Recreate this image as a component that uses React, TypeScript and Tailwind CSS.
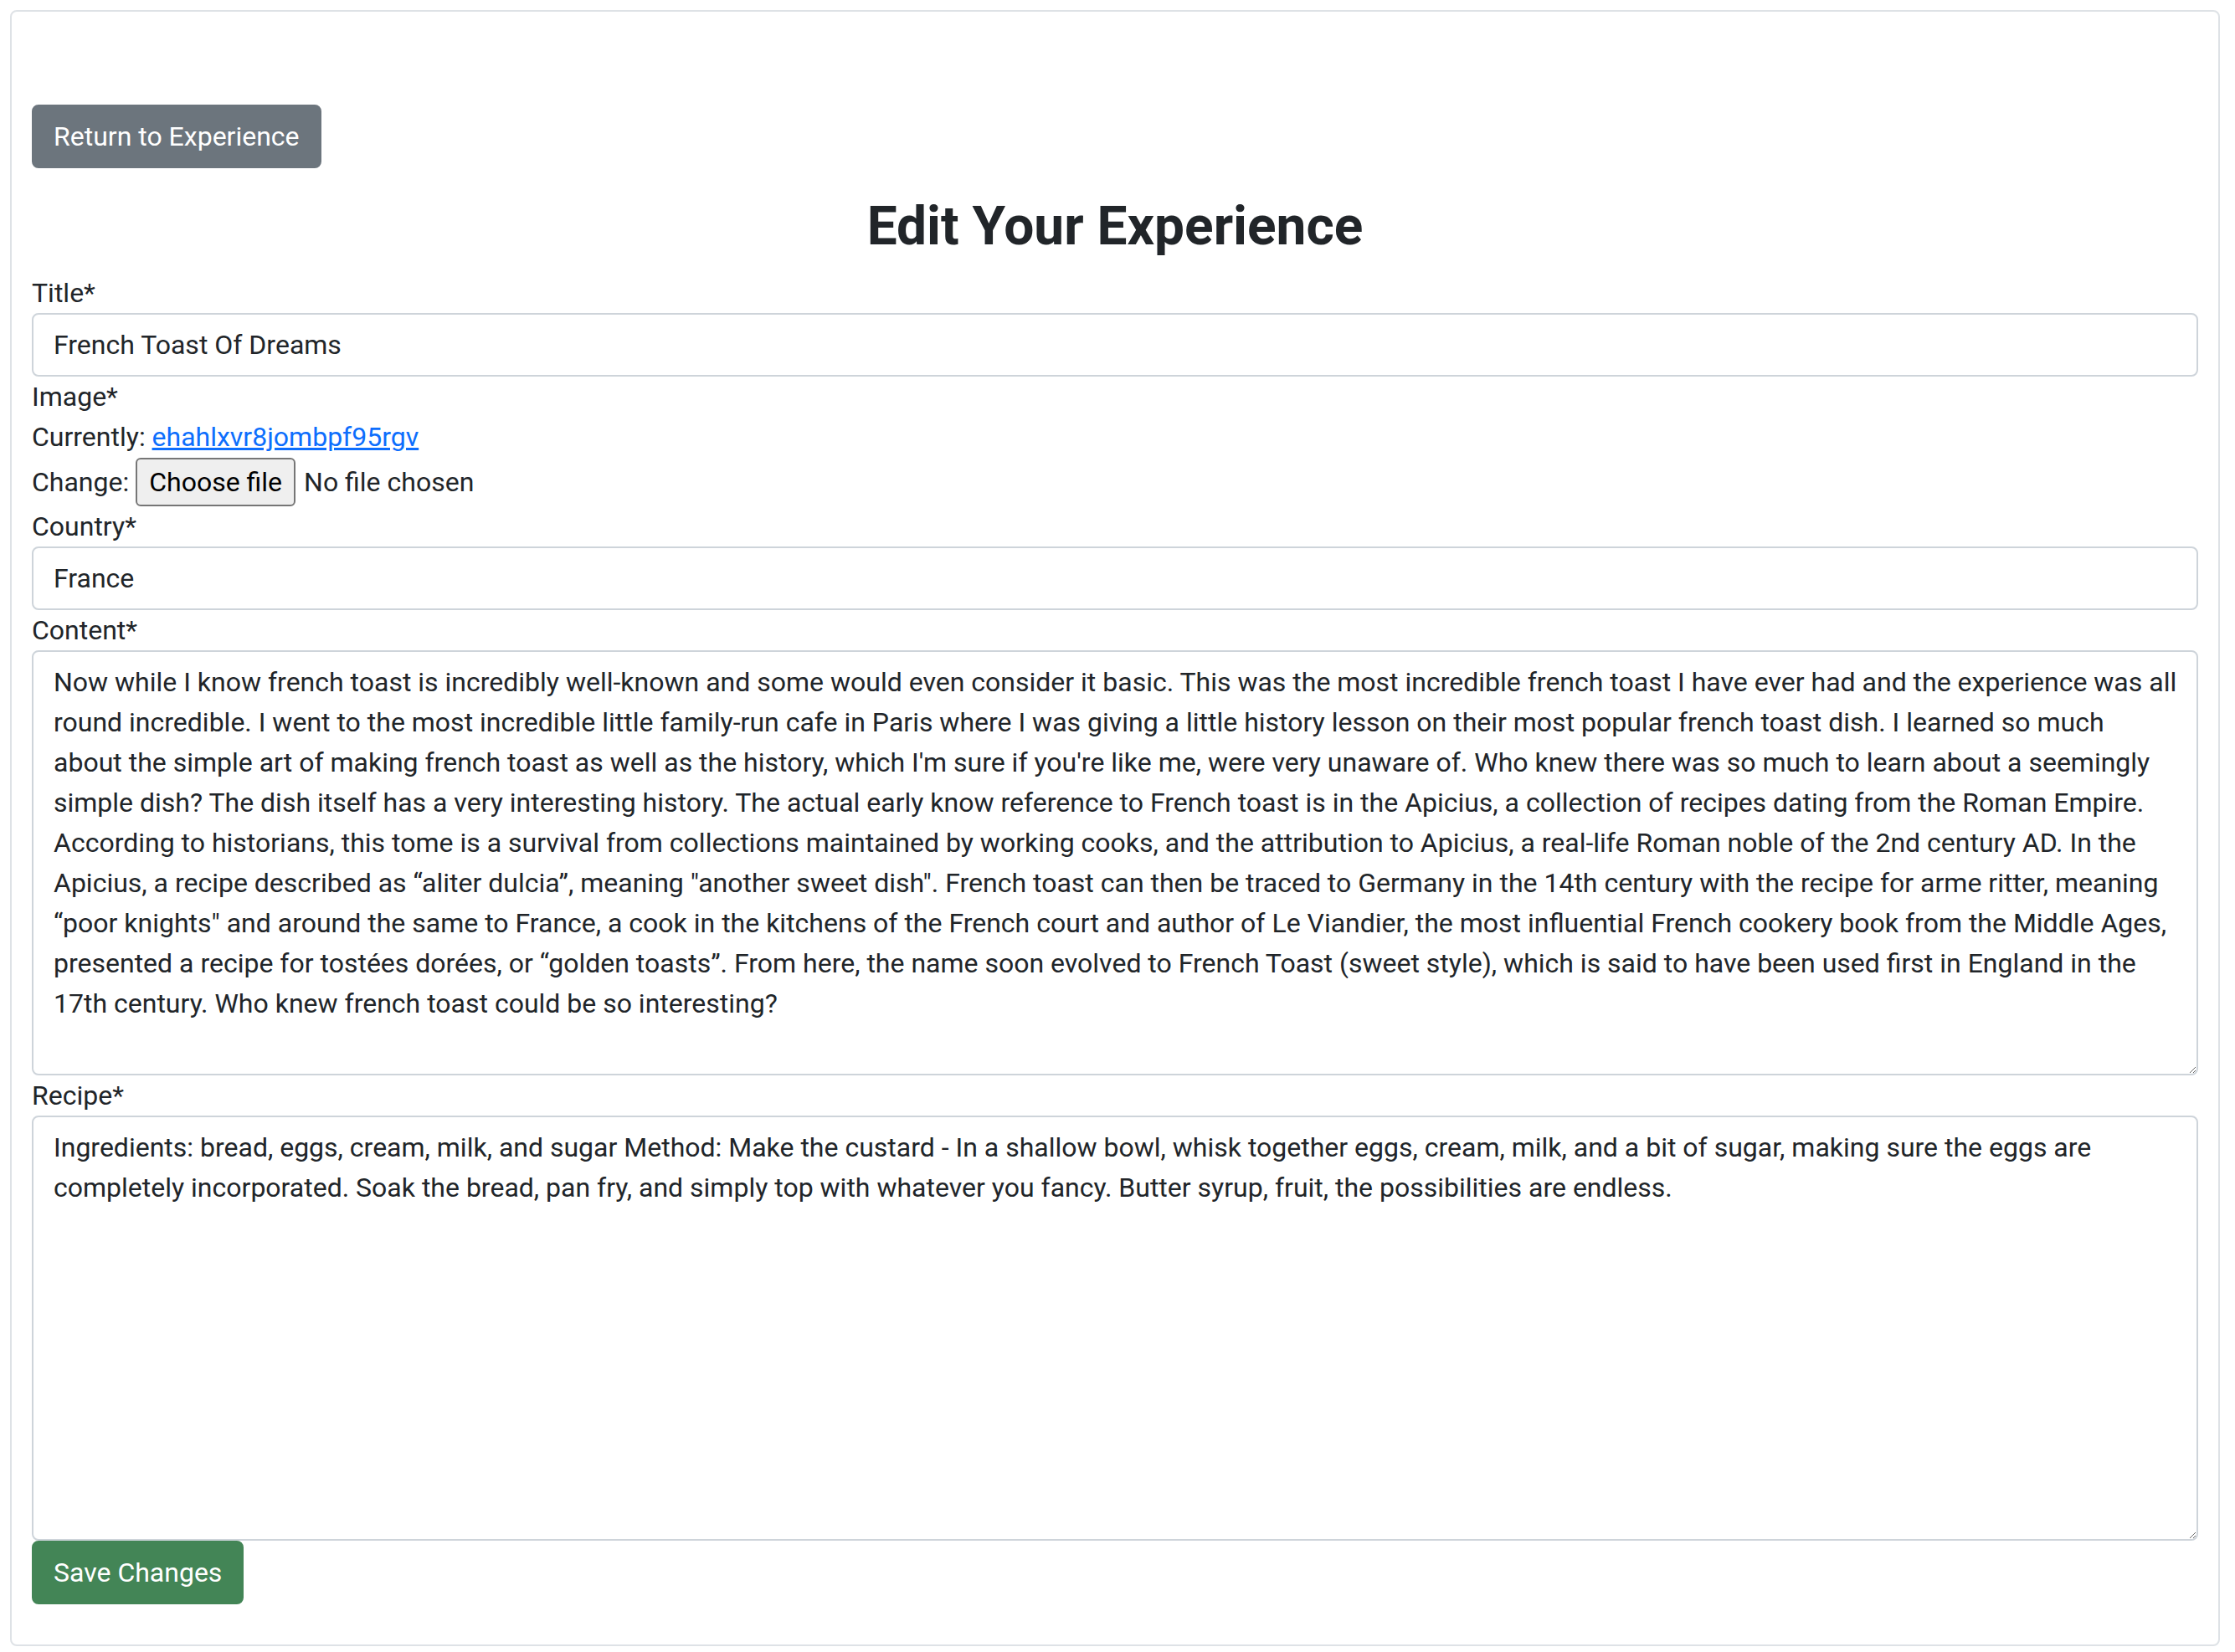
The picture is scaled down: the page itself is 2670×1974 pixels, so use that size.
import React from "react";

const contentText = [
  "Now while I know french toast is incredibly well-known and some would even consider it basic. This was the most incredible french toast I have ever had and the experience was all",
  "round incredible. I went to the most incredible little family-run cafe in Paris where I was giving a little history lesson on their most popular french toast dish. I learned so much",
  "about the simple art of making french toast as well as the history, which I'm sure if you're like me, were very unaware of. Who knew there was so much to learn about a seemingly",
  "simple dish? The dish itself has a very interesting history. The actual early know reference to French toast is in the Apicius, a collection of recipes dating from the Roman Empire.",
  "According to historians, this tome is a survival from collections maintained by working cooks, and the attribution to Apicius, a real-life Roman noble of the 2nd century AD. In the",
  "Apicius, a recipe described as \u201Caliter dulcia\u201D, meaning \"another sweet dish\". French toast can then be traced to Germany in the 14th century with the recipe for arme ritter, meaning",
  "\u201Cpoor knights\" and around the same to France, a cook in the kitchens of the French court and author of Le Viandier, the most influential French cookery book from the Middle Ages,",
  "presented a recipe for tost\u00E9es dor\u00E9es, or \u201Cgolden toasts\u201D. From here, the name soon evolved to French Toast (sweet style), which is said to have been used first in England in the",
  "17th century. Who knew french toast could be so interesting?",
].join("\n");

const recipeText = [
  "Ingredients: bread, eggs, cream, milk, and sugar Method: Make the custard - In a shallow bowl, whisk together eggs, cream, milk, and a bit of sugar, making sure the eggs are",
  "completely incorporated. Soak the bread, pan fry, and simply top with whatever you fancy. Butter syrup, fruit, the possibilities are endless.",
].join("\n");

function Label({ children }: { children: React.ReactNode }) {
  return <label className="block text-[32px] leading-[48px]">{children}</label>;
}

export default function App() {
  return (
    <div className="min-h-screen bg-white font-['Roboto','Liberation_Sans',sans-serif] text-[#212529] pt-[12px]">
      <div className="ml-[12px] w-[2640px] border-2 border-[#dee2e6] rounded-[8px] px-[24px] pt-[111px] pb-[48px]">
        <button className="inline-block bg-[#6c757d] border-2 border-[#6c757d] rounded-[8px] px-[24px] py-[12px] text-[32px] leading-[48px] text-white">
          Return to Experience
        </button>
        <h2 className="text-center text-[64px] leading-[1.2] font-bold mt-[32px] mb-[16px]">
          Edit Your Experience
        </h2>
        <form className="flex flex-col" onSubmit={(e) => e.preventDefault()}>
          <Label>Title*</Label>
          <input
            type="text"
            defaultValue="French Toast Of Dreams"
            className="block w-full h-[76px] border-2 border-[#ced4da] rounded-[8px] px-[24px] py-[12px] text-[32px] leading-[48px] text-[#212529] outline-none"
          />
          <Label>Image*</Label>
          <div className="text-[32px] leading-[48px]">
            Currently:{" "}
            <a href="#" className="text-[#0d6efd] underline">
              ehahlxvr8jombpf95rgv
            </a>
          </div>
          <div className="flex items-center pt-[1px] text-[32px] leading-[48px]">
            <span>Change:</span>
            <button
              type="button"
              className="ml-[8px] h-[58px] px-[14px] border-2 border-[#767676] rounded-[6px] bg-[#efefef] text-black text-[32px] leading-[48px]"
            >
              Choose file
            </button>
            <span className="ml-[10px]">No file chosen</span>
          </div>
          <Label>Country*</Label>
          <input
            type="text"
            defaultValue="France"
            className="block w-full h-[76px] border-2 border-[#ced4da] rounded-[8px] px-[24px] py-[12px] text-[32px] leading-[48px] text-[#212529] outline-none"
          />
          <Label>Content*</Label>
          <textarea
            defaultValue={contentText}
            wrap="off"
            className="block w-full h-[508px] border-2 border-[#ced4da] rounded-[8px] px-[24px] py-[12px] text-[32px] leading-[48px] text-[#212529] outline-none overflow-hidden"
          />
          <Label>Recipe*</Label>
          <textarea
            defaultValue={recipeText}
            wrap="off"
            className="block w-full h-[508px] border-2 border-[#ced4da] rounded-[8px] px-[24px] py-[12px] text-[32px] leading-[48px] text-[#212529] outline-none overflow-hidden"
          />
          <div>
            <button
              type="submit"
              className="inline-block bg-[#438556] border-2 border-[#438556] rounded-[8px] px-[24px] py-[12px] text-[32px] leading-[48px] text-white"
            >
              Save Changes
            </button>
          </div>
        </form>
      </div>
    </div>
  );
}
